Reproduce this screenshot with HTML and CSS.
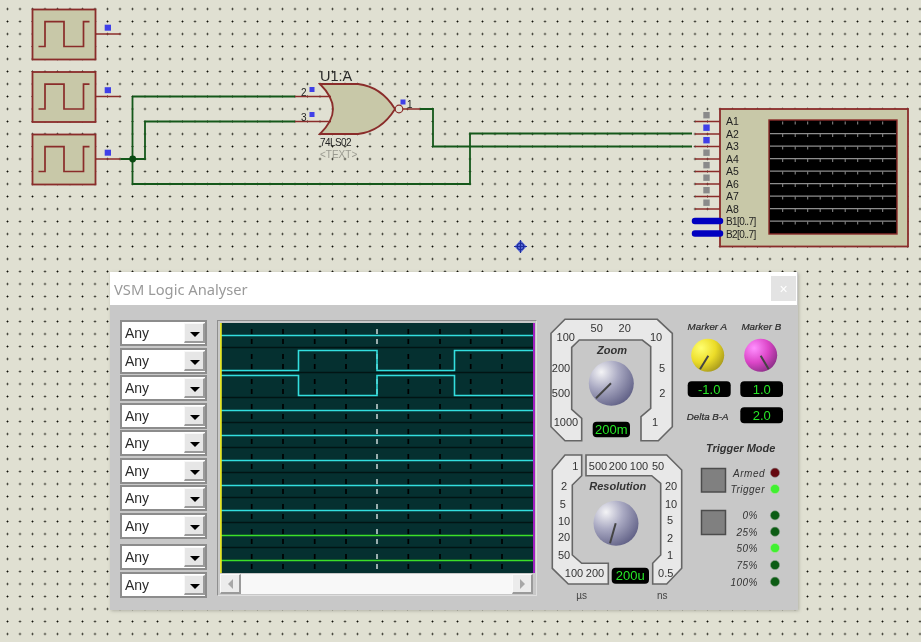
FILE: index.html
```html
<!DOCTYPE html>
<html lang="en">
<head>
<meta charset="utf-8">
<title>VSM Logic Analyser</title>
<link rel="stylesheet" href="styles.css">
</head>
<body>
<div class="stage">
  <svg class="schematic" width="921" height="642" viewBox="0 0 921 642">
    <defs>
      <g id="gen">
        <rect x="32.5" y="9.5" width="63" height="50" class="part"/>
        <path d="M38.5 46.5H45V21.7H64V46.5H83.5V21.7H89.5" class="pin"/>
      </g>
    </defs>
    <use href="#gen"/>
    <use href="#gen" y="62.5"/>
    <use href="#gen" y="125"/>
    <path d="M95.5 34H120.5M95.5 96.5H120.5M95.5 159H120.5" class="pin"/>
    <path d="M120.5 159H145V121.5H295M132.5 96.5H295M132.5 96.5V184H470V133.5H692M420 109H433V146.5H692" class="wire"/>
    <circle cx="132.7" cy="159" r="3.4" class="junction"/>
    <rect x="104.7" y="24.7" width="6.3" height="6" class="probe"/>
    <rect x="104.7" y="87.2" width="6.3" height="6" class="probe"/>
    <rect x="104.7" y="149.7" width="6.3" height="6" class="probe"/>

    <path d="M320 84H358C375 86 387 96 395 109C387 122 375 132 358 134H320C328 126 333 118 333 109C333 100 328 92 320 84Z" class="part"/>
    <path d="M295 96.5H331M295 121.5H331M403 109H420" class="pin"/>
    <circle cx="399" cy="109" r="3.8" class="bubble"/>
    <rect x="309.5" y="87" width="5" height="5" class="probe"/>
    <rect x="309.5" y="112" width="5" height="5" class="probe"/>
    <rect x="400.5" y="99.5" width="5" height="5" class="probe"/>
    <text x="320" y="81" class="ref">U1:A</text>
    <text x="301" y="96" class="pintext">2</text>
    <text x="301" y="121" class="pintext">3</text>
    <text x="407" y="108" class="pintext">1</text>
    <text x="320" y="146" class="val">74LS02</text>
    <text x="320" y="158" class="val grey">&lt;TEXT&gt;</text>

    <rect x="720" y="109" width="188" height="137.5" class="part"/>
    <path d="M695 121.5H720M695 134H720M695 146.5H720M695 159H720M695 171.5H720M695 184H720M695 196.5H720M695 209H720" class="pin"/>
    <path d="M695 221H720M695 233.5H720" class="bus"/>
    <rect x="703.3" y="112" width="6.4" height="6.4" class="stub"/>
    <rect x="703.3" y="124.5" width="6.4" height="6.4" class="probe"/>
    <rect x="703.3" y="137" width="6.4" height="6.4" class="probe"/>
    <rect x="703.3" y="149.5" width="6.4" height="6.4" class="stub"/>
    <rect x="703.3" y="162" width="6.4" height="6.4" class="stub"/>
    <rect x="703.3" y="174.5" width="6.4" height="6.4" class="stub"/>
    <rect x="703.3" y="187" width="6.4" height="6.4" class="stub"/>
    <rect x="703.3" y="199.5" width="6.4" height="6.4" class="stub"/>
    <text x="726" y="125" class="lab">A1</text>
    <text x="726" y="137.5" class="lab">A2</text>
    <text x="726" y="150" class="lab">A3</text>
    <text x="726" y="162.5" class="lab">A4</text>
    <text x="726" y="175" class="lab">A5</text>
    <text x="726" y="187.5" class="lab">A6</text>
    <text x="726" y="200" class="lab">A7</text>
    <text x="726" y="212.5" class="lab">A8</text>
    <text x="726" y="225" class="lab lab-bus">B1[0..7]</text>
    <text x="726" y="237.5" class="lab lab-bus">B2[0..7]</text>
    <rect x="769" y="120" width="128" height="114" class="screen"/>
    <path d="M770 133.7H896M770 146.2H896M770 158.7H896M770 171.2H896M770 183.7H896M770 196.2H896M770 208.7H896M770 221.2H896" class="screengrid"/>
    <path d="M782.7 121V233M795.2 121V233M807.7 121V233M820.2 121V233M832.7 121V233M845.2 121V233M857.7 121V233M870.2 121V233M882.7 121V233" class="screenticks"/>

    <path d="M520.5 240L526.5 246.5L520.5 253L514.5 246.5Z" class="cursor-fill"/>
    <path d="M514 246.5H527M520.5 240V253" class="cursor"/>
    <circle cx="520.5" cy="246.5" r="3.2" class="cursor"/>
  </svg>

  <section class="window">
    <header class="titlebar">
      <h1 class="title">VSM Logic Analyser</h1>
      <button class="close" type="button">×</button>
    </header>
    <div class="panel">
      <div class="channels">
        <div class="combo"><span class="combo-text">Any</span><span class="combo-btn"></span></div>
        <div class="combo"><span class="combo-text">Any</span><span class="combo-btn"></span></div>
        <div class="combo"><span class="combo-text">Any</span><span class="combo-btn"></span></div>
        <div class="combo"><span class="combo-text">Any</span><span class="combo-btn"></span></div>
        <div class="combo"><span class="combo-text">Any</span><span class="combo-btn"></span></div>
        <div class="combo"><span class="combo-text">Any</span><span class="combo-btn"></span></div>
        <div class="combo"><span class="combo-text">Any</span><span class="combo-btn"></span></div>
        <div class="combo"><span class="combo-text">Any</span><span class="combo-btn"></span></div>
        <div class="combo combo-split"><span class="combo-text">Any</span><span class="combo-btn"></span></div>
        <div class="combo"><span class="combo-text">Any</span><span class="combo-btn"></span></div>
      </div>

      <div class="scope">
        <svg class="traces" width="315" height="250" viewBox="220 323 315 250">
          <rect x="220" y="323" width="315" height="250" class="trace-bg"/>
          <path d="M220 347.5H535M220 372.5H535M220 397.5H535M220 422.5H535M220 447.5H535M220 472.5H535M220 497.5H535M220 522.5H535M220 547.5H535" class="trace-sep"/>
          <path d="M251.7 329V573M283 329V573M314.7 329V573M346 329V573M408.3 329V573M440 329V573M470.7 329V573M502 329V573" class="trace-div"/>
          <path d="M377 329V573" class="trace-mid"/>
          <path d="M220 335.5H533M220 370.5H298.5V350.5H377V370.5H454.5V350.5H533M220 375.5H298.5V395.5H377V375.5H454.5V395.5H533M220 410.5H533M220 435.5H533M220 460.5H533M220 485.5H533M220 510.5H533" class="trace-cyan"/>
          <path d="M220 535.5H533M220 560.5H533" class="trace-green"/>
          <rect x="220" y="323" width="1.8" height="250" class="marker-a"/>
          <rect x="533" y="323" width="2" height="250" class="marker-b"/>
        </svg>
        <div class="scrollbar">
          <span class="sb-btn"><span class="sb-left"></span></span>
          <span class="sb-track"></span>
          <span class="sb-btn"><span class="sb-right"></span></span>
        </div>
      </div>

      <svg class="controls" width="253" height="305" viewBox="545 305 253 305">
        <defs>
          <radialGradient id="steel" cx="28%" cy="25%" r="85%">
            <stop offset="0" stop-color="#f4f4f6"/>
            <stop offset=".45" stop-color="#a9a9c2"/>
            <stop offset="1" stop-color="#5e5e84"/>
          </radialGradient>
          <radialGradient id="yellow" cx="30%" cy="28%" r="80%">
            <stop offset="0" stop-color="#ffff70"/>
            <stop offset=".55" stop-color="#ecdc28"/>
            <stop offset="1" stop-color="#a89a1c"/>
          </radialGradient>
          <radialGradient id="pink" cx="30%" cy="28%" r="80%">
            <stop offset="0" stop-color="#ff90ff"/>
            <stop offset=".55" stop-color="#dc46c8"/>
            <stop offset="1" stop-color="#8c3088"/>
          </radialGradient>
        </defs>

        <path d="M565 319.3H657.3L672.3 333.3V426.7L658.3 440.7H641V416.7L650.7 408.3V346.7L642.3 340H579.3L571.7 347.3V409.3L581.7 418.3V440.7H565L551 426.7V333.3Z" class="frame"/>
        <text x="596.7" y="332" class="scale">50</text>
        <text x="624.7" y="332" class="scale">20</text>
        <text x="565.7" y="341" class="scale">100</text>
        <text x="656" y="341" class="scale">10</text>
        <text x="561" y="372" class="scale">200</text>
        <text x="662" y="372" class="scale">5</text>
        <text x="561" y="397" class="scale">500</text>
        <text x="662.3" y="397" class="scale">2</text>
        <text x="566" y="426" class="scale">1000</text>
        <text x="655" y="426" class="scale">1</text>
        <text x="612" y="354" class="heading">Zoom</text>
        <circle cx="611.3" cy="383.3" r="22.5" fill="url(#steel)"/>
        <path d="M596 398.3L611 383.3" class="needle"/>
        <rect x="592.7" y="421.7" width="37.3" height="15.6" rx="4" class="lcd"/>
        <text x="611.3" y="434.2" class="lcd-text">200m</text>

        <text x="707.3" y="329.5" class="caption">Marker A</text>
        <text x="761.3" y="329.5" class="caption">Marker B</text>
        <circle cx="707.7" cy="355.3" r="16.5" fill="url(#yellow)"/>
        <path d="M700 369.3L708.3 355.7" class="needle"/>
        <circle cx="760.7" cy="355.3" r="16.5" fill="url(#pink)"/>
        <path d="M768.7 369.3L760.7 355.7" class="needle"/>
        <rect x="687.7" y="381.3" width="43" height="15.7" rx="4" class="lcd"/>
        <text x="709.2" y="394" class="lcd-text">-1.0</text>
        <rect x="740.3" y="381.3" width="42.7" height="15.7" rx="4" class="lcd"/>
        <text x="761.7" y="394" class="lcd-text">1.0</text>
        <text x="707.7" y="419.5" class="caption">Delta B-A</text>
        <rect x="740.3" y="407.3" width="42.7" height="16" rx="4" class="lcd"/>
        <text x="761.7" y="420" class="lcd-text">2.0</text>

        <text x="740.7" y="452" class="heading">Trigger Mode</text>
        <rect x="701.5" y="468.5" width="24" height="23.5" class="tbtn"/>
        <rect x="701.5" y="510.5" width="24" height="24" class="tbtn"/>
        <text x="765" y="476.5" class="led-text">Armed</text>
        <text x="765" y="493" class="led-text">Trigger</text>
        <circle cx="775" cy="472.7" r="4.6" class="led-red"/>
        <circle cx="775" cy="489" r="4.6" class="led-on"/>
        <text x="758" y="519" class="led-text">0%</text>
        <text x="758" y="535.5" class="led-text">25%</text>
        <text x="758" y="552" class="led-text">50%</text>
        <text x="758" y="569" class="led-text">75%</text>
        <text x="758" y="585.5" class="led-text">100%</text>
        <circle cx="775" cy="515.3" r="4.6" class="led-off"/>
        <circle cx="775" cy="531.7" r="4.6" class="led-off"/>
        <circle cx="775" cy="548" r="4.6" class="led-on"/>
        <circle cx="775" cy="565" r="4.6" class="led-off"/>
        <circle cx="775" cy="581.7" r="4.6" class="led-off"/>

        <path d="M565 455H581.7V475.7L572.3 485V555L581.7 563.3H608.3V584H568.3L552.3 568.3V470Z" class="frame"/>
        <path d="M586 455H666.7L681.7 470V568.3L666.7 584H652.7V563.3L660.7 555V483.3L651.7 475.7H586Z" class="frame"/>
        <text x="575.3" y="469.5" class="scale">1</text>
        <text x="598" y="469.5" class="scale">500</text>
        <text x="618" y="469.5" class="scale">200</text>
        <text x="639" y="469.5" class="scale">100</text>
        <text x="658" y="469.5" class="scale">50</text>
        <text x="564" y="490" class="scale">2</text>
        <text x="562.7" y="508" class="scale">5</text>
        <text x="564" y="524.5" class="scale">10</text>
        <text x="564" y="541" class="scale">20</text>
        <text x="564" y="559" class="scale">50</text>
        <text x="574" y="576.7" class="scale">100</text>
        <text x="595" y="576.7" class="scale">200</text>
        <text x="671" y="489.7" class="scale">20</text>
        <text x="671" y="508" class="scale">10</text>
        <text x="670" y="524" class="scale">5</text>
        <text x="670" y="541.5" class="scale">2</text>
        <text x="670" y="559" class="scale">1</text>
        <text x="665.7" y="577" class="scale">0.5</text>
        <text x="617.7" y="490" class="heading">Resolution</text>
        <circle cx="616" cy="523.3" r="22.5" fill="url(#steel)"/>
        <path d="M610 543.3L615.7 523.3" class="needle"/>
        <rect x="611.7" y="567.7" width="37.3" height="16" rx="4" class="lcd"/>
        <text x="630.3" y="580.3" class="lcd-text">200u</text>
        <text x="581.7" y="599" class="unit">µs</text>
        <text x="662.3" y="599" class="unit">ns</text>
      </svg>
    </div>
  </section>
</div>
</body>
</html>
```
FILE: styles.css
```css
* { box-sizing: border-box; }
html, body { margin: 0; padding: 0; }
body { width: 921px; height: 642px; overflow: hidden; background: #e0e0d2; }

.stage {
  position: relative;
  width: 921px;
  height: 642px;
  overflow: hidden;
  filter: blur(0.45px);
  background-color: #e0e0d2;
  background-image: radial-gradient(circle, #101008 0.8px, transparent 1.1px);
  background-size: 12.5px 12.5px;
  background-position: 1.25px 2.75px;
}

/* schematic */
.schematic { position: absolute; left: 0; top: 0; display: block; }
.part { fill: #c8c8a8; stroke: #8a2c2a; stroke-width: 1.8; }
.pin { fill: none; stroke: #8a2c2a; stroke-width: 1.7; }
.wire { fill: none; stroke: #14581a; stroke-width: 1.8; }
.junction { fill: #0a4a12; }
.bubble { fill: #e0e0d2; stroke: #8a2c2a; stroke-width: 1.2; }
.probe { fill: #3f3fe8; }
.stub { fill: #8a8a8a; }
.bus { fill: none; stroke: #0000c0; stroke-width: 6.5; stroke-linecap: round; }
.ref { font: 14.5px "Liberation Sans", Arial, sans-serif; fill: #2a2a2a; }
.pintext { font: 10px "Liberation Sans", Arial, sans-serif; fill: #222; }
.val { font: 10px "Liberation Sans", Arial, sans-serif; fill: #222; letter-spacing: -.6px; }
.val.grey { fill: #9a9a90; letter-spacing: 0; }
.lab { font: 10.5px "Liberation Sans", Arial, sans-serif; fill: #222; }
.lab-bus { font-size: 10px; letter-spacing: -.6px; }
.screen { fill: #000; stroke: #8a2c2a; stroke-width: 1.4; }
.screengrid { fill: none; stroke: #8e8e8e; stroke-width: 1.2; }
.screenticks { fill: none; stroke: #8e8e8e; stroke-width: 1; stroke-dasharray: 3 9.5; stroke-dashoffset: -0.5; }
.cursor { fill: none; stroke: #1c2c9c; stroke-width: 1.1; }
.cursor-fill { fill: #5a6ad8; }

/* window */
.window {
  position: absolute;
  left: 110px;
  top: 272px;
  width: 688px;
  height: 338px;
  display: flex;
  flex-direction: column;
  background: #c8c8c8;
  box-shadow: 1px 1px 3px rgba(90, 90, 80, .35);
}
.titlebar {
  flex: 0 0 33px;
  display: flex;
  align-items: center;
  justify-content: space-between;
  padding: 0 1px 0 4px;
  background: #fff;
  margin-right: 1px;
}
.title {
  margin: 0;
  font: 400 14.7px "Noto Sans", "Open Sans", sans-serif;
  color: #9a9a9a;
}
.close {
  width: 25px;
  height: 25px;
  padding: 0;
  border: 0;
  background: #e3e3e3;
  color: #fff;
  font: 14px "Liberation Sans", Arial, sans-serif;
}
.panel { flex: 1; display: flex; align-items: flex-start; padding-left: 10px; }

/* channel selectors */
.channels { width: 87px; margin-top: 15px; display: flex; flex-direction: column; gap: 1.5px; }
.combo {
  height: 26px;
  display: flex;
  align-items: stretch;
  border: 2px solid #8c8c8c;
  background: #fff;
}
.combo-split { margin-top: 4px; }
.combo-text {
  flex: 1;
  padding-left: 3px;
  font: 14px/23px "Liberation Sans", Arial, sans-serif;
  color: #2a2a2a;
}
.combo-btn {
  position: relative;
  width: 21px;
  background: #e6e6e6;
  border-style: solid;
  border-width: 1px 2px 2px 1px;
  border-color: #f8f8f8 #9a9a9a #9a9a9a #f8f8f8;
  margin: 1px 0;
}
.combo-btn::after {
  content: "";
  position: absolute;
  left: 5px;
  top: 8px;
  border-left: 5px solid transparent;
  border-right: 5px solid transparent;
  border-top: 5px solid #000;
}

/* trace display */
.scope {
  width: 320px;
  height: 276px;
  margin: 15px 0 0 10px;
  padding: 3px 2px 1px 3px;
  display: flex;
  flex-direction: column;
  border: 1px solid;
  border-color: #8e8e8e #dedede #dedede #8e8e8e;
  background: #c8c8c8;
}
.traces { display: block; flex: none; margin-left: -1px; margin-top: -1px; }
.trace-bg { fill: #053030; }
.trace-sep { fill: none; stroke: #021414; stroke-width: 1.4; }
.trace-div { fill: none; stroke: #000; stroke-width: 1.7; stroke-dasharray: 5 5 5 10; }
.trace-mid { fill: none; stroke: #b4c4c4; stroke-width: 1.7; stroke-dasharray: 5 5 5 10; }
.trace-cyan { fill: none; stroke: #33dede; stroke-width: 1.6; }
.trace-green { fill: none; stroke: #3ce028; stroke-width: 1.6; }
.marker-a { fill: #e4e428; }
.marker-b { fill: #a020c0; }
.scrollbar { flex: 1; display: flex; margin: 1px 1px 0 -1px; background: #f8f8f8; }
.sb-btn {
  width: 21px;
  display: flex;
  align-items: center;
  justify-content: center;
  background: #ececec;
  border-style: solid;
  border-width: 1px 2px 2px 1px;
  border-color: #fafafa #9a9a9a #9a9a9a #fafafa;
}
.sb-track {
  flex: 1;
  background-color: #f8f8f8;
  background-image: radial-gradient(circle, #e6e6e6 .5px, transparent .7px);
  background-size: 2px 2px;
}
.sb-left { border-top: 5px solid transparent; border-bottom: 5px solid transparent; border-right: 5px solid #a8a8a8; }
.sb-right { border-top: 5px solid transparent; border-bottom: 5px solid transparent; border-left: 5px solid #a8a8a8; }

/* controls */
.controls { display: block; margin-left: 8px; flex: none; }
.frame { fill: #e8e8e8; stroke: #666; stroke-width: 1.6; }
.scale { font: 11px "Liberation Sans", Arial, sans-serif; fill: #333; text-anchor: middle; }
.heading { font: italic 700 11px "Liberation Sans", Arial, sans-serif; fill: #333; text-anchor: middle; }
.caption { font: italic 9.8px "Liberation Sans", Arial, sans-serif; fill: #2a2a2a; stroke: #2a2a2a; stroke-width: .2; text-anchor: middle; }
.needle { fill: none; stroke: #444; stroke-width: 2; }
.lcd { fill: #000; }
.lcd-text { font: 13px "Liberation Sans", Arial, sans-serif; fill: #26e626; text-anchor: middle; }
.tbtn { fill: #808080; stroke: #4c4c4c; stroke-width: 1.5; }
.led-text { font: italic 10px "Liberation Sans", Arial, sans-serif; letter-spacing: .5px; fill: #333; text-anchor: end; }
.led-red { fill: #660810; stroke: #8c8c8c; stroke-width: .6; }
.led-on { fill: #40f030; stroke: #b0e0a0; stroke-width: .6; }
.led-off { fill: #0c5c14; stroke: #8ca08c; stroke-width: .6; }
.unit { font: 10px "Liberation Sans", Arial, sans-serif; fill: #444; text-anchor: middle; }
```
